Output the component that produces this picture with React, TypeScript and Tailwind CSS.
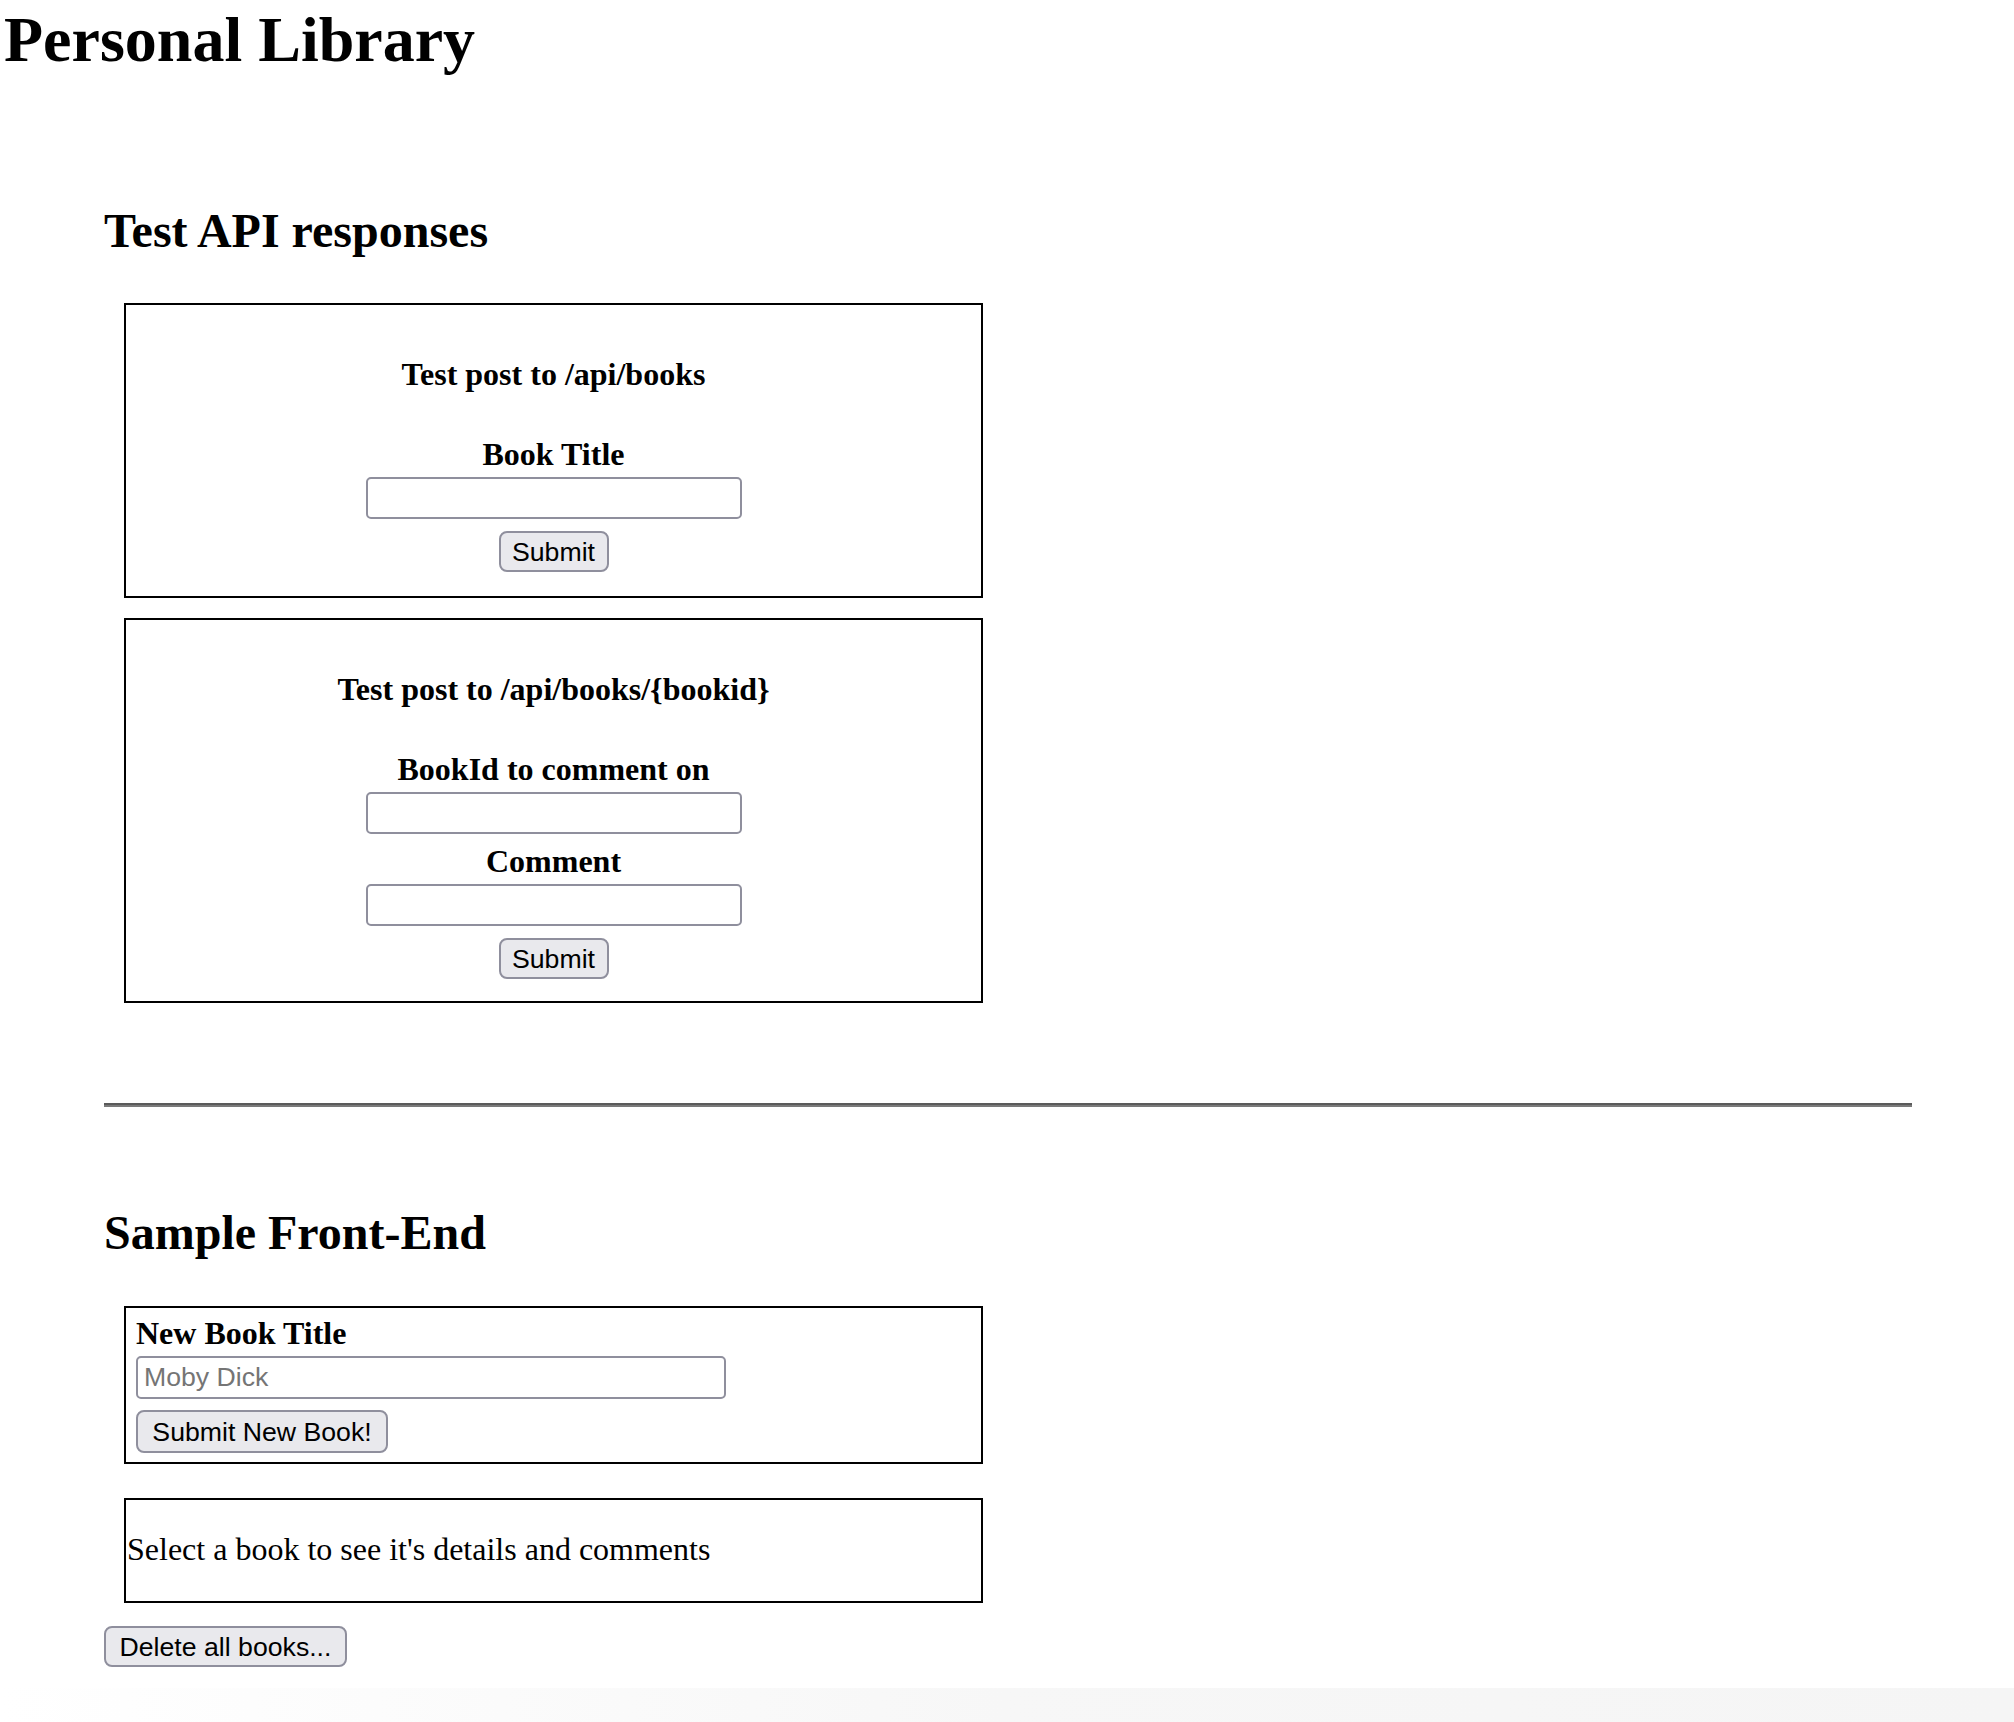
const btn =
  "inline-flex items-center justify-center h-[41px] rounded-[8px] border-2 border-[#8f8f9d] bg-[#e9e9ed] pt-[2px] text-[26.67px] leading-none text-black font-['Liberation_Sans',Arial,sans-serif]";
const field =
  "block h-[42px] rounded-[5px] border-2 border-[#8f8f9d] bg-white px-[6px] text-[26.67px] text-black font-['Liberation_Sans',Arial,sans-serif] placeholder:text-[#757575] outline-none";

export default function App() {
  return (
    <div className="min-h-[1722px] bg-white text-black font-['Liberation_Serif','Times_New_Roman',serif]">
      <header>
        <h1 className="pl-[4px] text-[64px] leading-[80px] font-bold">Personal Library</h1>
      </header>

      <div className="ml-[104px] mr-[102px]">
        <div>
          <h2 className="mt-[119px] text-[48px] leading-[64px] font-bold">Test API responses</h2>

          <form className="mt-[40px] ml-[20px] w-[859px] border-2 border-black pt-[51px] pb-[24px] text-center">
            <h4 className="text-[32px] leading-[36px] font-bold">Test post to /api/books</h4>
            <label className="mt-[44px] block text-[32px] leading-[36px] font-bold">Book Title</label>
            <input type="text" className={`${field} mx-auto mt-[5px] w-[376px]`} />
            <button type="button" className={`${btn} mt-[12px] w-[110px]`}>Submit</button>
          </form>

          <form className="mt-[20px] ml-[20px] w-[859px] border-2 border-black pt-[51px] pb-[22px] text-center">
            <h4 className="text-[32px] leading-[36px] font-bold">Test post to /api/books/{"{bookid}"}</h4>
            <label className="mt-[44px] block text-[32px] leading-[36px] font-bold">BookId to comment on</label>
            <input type="text" className={`${field} mx-auto mt-[5px] w-[376px]`} />
            <label className="mt-[9px] block text-[32px] leading-[36px] font-bold">Comment</label>
            <input type="text" className={`${field} mx-auto mt-[5px] w-[376px]`} />
            <button type="button" className={`${btn} mt-[12px] w-[110px]`}>Submit</button>
          </form>
        </div>

        <hr className="mt-[100px] h-0 border-0 border-t-2 border-b-2 border-t-[#5a5a5a] border-b-[#7a7a7a]" />

        <div>
          <h2 className="mt-[94px] text-[48px] leading-[64px] font-bold">Sample Front-End</h2>

          <form className="mt-[41px] ml-[20px] w-[859px] border-2 border-black pt-[7px] pl-[10px] pb-[9px]">
            <label className="block text-[32px] leading-[36px] font-bold">New Book Title</label>
            <input type="text" placeholder="Moby Dick" className={`${field} mt-[5px] h-[43px] w-[590px]`} />
            <button type="button" className={`${btn} mt-[11px] h-[43px] w-[252px]`}>Submit New Book!</button>
          </form>

          <div className="mt-[34px] ml-[20px] h-[105px] w-[859px] border-2 border-black pt-[31px] pl-[1px]">
            <p className="text-[32px] leading-[36px]">Select a book to see it's details and comments</p>
          </div>

          <button type="button" className={`${btn} mt-[23px] w-[243px]`}>Delete all books...</button>
        </div>
      </div>

      <div className="mt-[21px] h-[34px] bg-linear-to-r from-white via-[#f7f7f7] to-[#f5f5f5]" />
    </div>
  );
}
